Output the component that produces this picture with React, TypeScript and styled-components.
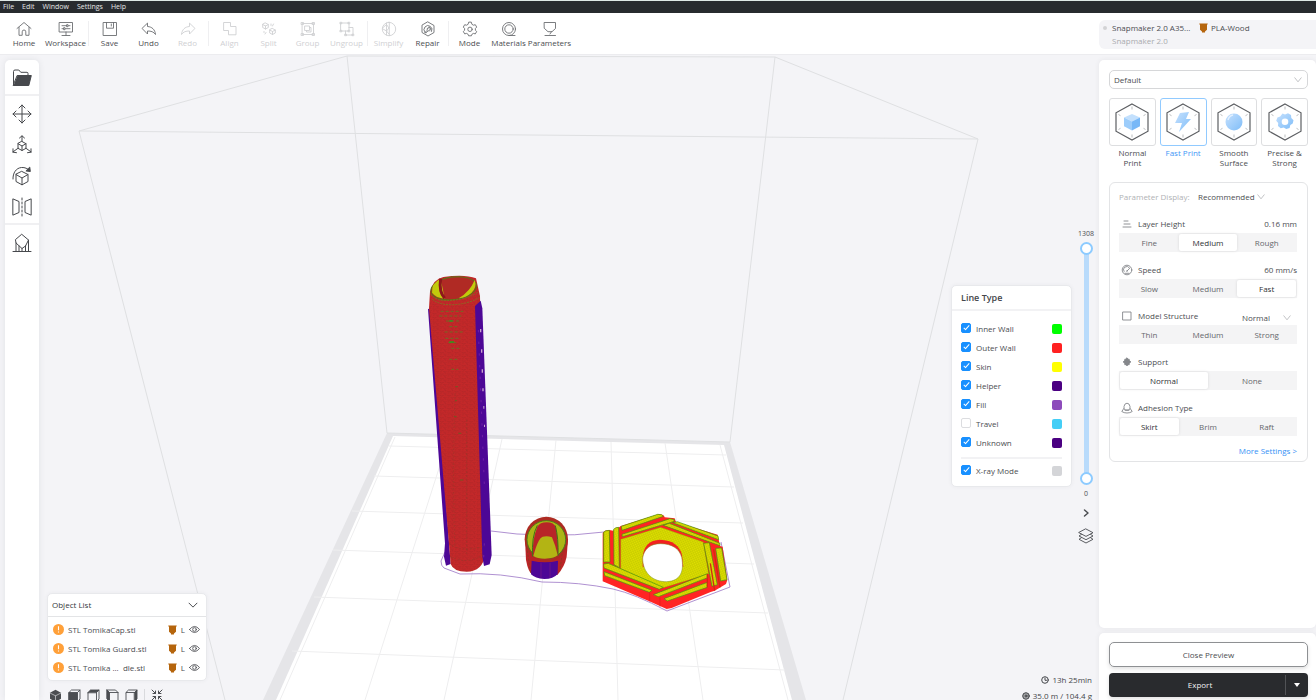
import React, { useState } from "react";
import styled, { createGlobalStyle } from "styled-components";

const ink = "#4b4d51";
const muted = "#b0b2b5";
const line = "#e3e4e6";
const canvas = "#f4f4f7";
const blue = "#1890ff";

const Global = createGlobalStyle`
  *, *::before, *::after { box-sizing: border-box; }
  body { margin: 0; background: ${canvas}; }
  body, button, input, select { font-family: "Open Sans", "Noto Sans", sans-serif; font-size: 8px; line-height: 12px; color: ${ink}; }
  button { border: 0; padding: 0; background: none; cursor: pointer; }
  svg { display: block; flex: none; }
  fieldset { border: 0; margin: 0; padding: 0; min-width: 0; }
  h2, ul { margin: 0; padding: 0; list-style: none; }
`;

const Page = styled.div`
  display: flex;
  flex-direction: column;
  height: 100vh;
  overflow: hidden;
`;

const MenuBar = styled.nav`
  display: flex;
  align-items: center;
  gap: 8px;
  flex: none;
  height: 13px;
  padding-left: 3px;
  background: #282b2f;
  border-top: 1px solid #dfe9e6;
`;

const MenuItem = styled.button`
  color: #e6e6e6;
  font-size: 7px;
  line-height: 12px;
`;

const Header = styled.header`
  display: flex;
  flex: none;
  height: 42px;
  background: #fff;
  border-bottom: 1px solid #ececef;
`;

const Toolbar = styled.div`
  display: flex;
  flex: 1;
  padding: 8px 0 0 4px;
`;

const ToolButton = styled.button<{ $w?: number }>`
  display: flex;
  flex-direction: column;
  align-items: center;
  width: ${(p) => p.$w ?? 39}px;
  height: 30px;
  white-space: nowrap;
  color: ${ink};
  & svg { color: #6c6e72; }
  &:disabled, &:disabled svg { color: #cfd0d3; cursor: default; }
`;

const ToolDivider = styled.span`
  width: 1px;
  height: 25px;
  margin: 0 1px;
  background: #efeff1;
`;

const Machine = styled.div`
  display: grid;
  grid-template-columns: 9px 87px auto;
  align-content: center;
  row-gap: 1px;
  width: 217px;
  height: 29px;
  margin-top: 7px;
  padding-left: 4px;
  border-radius: 6px 0 0 6px;
  background: ${canvas};
`;

const Dot = styled.span`
  width: 4px;
  height: 4px;
  align-self: center;
  border-radius: 50%;
  background: #d2d3d5;
`;

const Series = styled.span`
  grid-column: 2;
  color: #a9abae;
`;

const Material = styled.span`
  display: flex;
  align-items: center;
  gap: 3px;
`;

const Body = styled.main`
  display: flex;
  flex: 1;
  min-height: 0;
`;

const Stage = styled.section`
  position: relative;
  display: flex;
  flex: 1;
  min-width: 0;
  overflow: hidden;
`;

const SceneSvg = styled.svg`
  position: absolute;
  inset: 0;
  width: 100%;
  height: 100%;
`;

const Rail = styled.div`
  position: relative;
  display: flex;
  flex-direction: column;
  width: 34px;
  margin: 5px 0 0 5px;
  border-radius: 5px 5px 0 0;
  background: #fff;
  box-shadow: 0 0 6px rgba(60, 65, 80, 0.1);
`;

const RailGroup = styled.div`
  display: flex;
  flex-direction: column;
  align-items: center;
  padding: 2px 0 1px;
  & + & { border-top: 2px solid #f0f0f2; }
`;

const RailButton = styled.button`
  display: flex;
  align-items: center;
  justify-content: center;
  width: 34px;
  height: 31px;
  color: #47494d;
`;

const LeftDock = styled.div`
  position: relative;
  display: flex;
  flex-direction: column;
  justify-content: flex-end;
  gap: 8px;
  width: 160px;
  margin-left: 8px;
`;

const Card = styled.section`
  background: #fff;
  border: 1px solid #e8e9ec;
  border-radius: 5px;
  box-shadow: 0 0 4px rgba(60, 65, 80, 0.05);
`;

const ObjectHead = styled.header`
  display: flex;
  align-items: center;
  justify-content: space-between;
  height: 23px;
  padding: 0 8px 0 4px;
  border-bottom: 1px solid ${line};
`;

const ObjectTitle = styled.h2`
  font-size: 8px;
  font-weight: 500;
  color: #35373a;
`;

const ObjectRows = styled.ul`
  padding: 3px 6px 3px 5px;
`;

const ObjectRow = styled.li`
  display: flex;
  align-items: center;
  gap: 4px;
  height: 19px;
`;

const ObjectName = styled.span`
  flex: 1;
  white-space: pre;
`;

const Views = styled.div`
  display: flex;
  align-items: flex-start;
  gap: 6px;
  height: 11px;
  padding-left: 2px;
  color: #85878b;
`;

const ViewDivider = styled.span`
  width: 1px;
  height: 11px;
  background: #d9dadd;
`;

const RightDock = styled.div`
  position: relative;
  display: flex;
  flex-direction: column;
  align-items: flex-end;
  margin-left: auto;
  padding: 42px 5px 0 0;
`;

const Preview = styled.div`
  display: flex;
  flex: 1;
  align-items: center;
  gap: 6px;
`;

const LineCard = styled(Card)`
  width: 121px;
`;

const LineTitle = styled.h2`
  padding: 6px 9px;
  border-bottom: 2px solid #f2f2f4;
  font-size: 9px;
  line-height: 11px;
  font-weight: 600;
  color: #45474b;
`;

const LineRows = styled.div`
  padding: 9px 9px 3px;
`;

const LineRow = styled.label<{ $apart?: boolean }>`
  display: flex;
  align-items: center;
  gap: 5px;
  height: ${(p) => (p.$apart ? 26 : 19)}px;
  margin-top: ${(p) => (p.$apart ? 4 : 0)}px;
  border-top: ${(p) => (p.$apart ? "2px solid #f2f2f4" : "0")};
`;

const Check = styled.input`
  appearance: none;
  width: 10px;
  height: 10px;
  margin: 0 0 2px;
  border: 1px solid #dcdde0;
  border-radius: 2px;
  background: #fff;
  &:checked {
    border-color: ${blue};
    background: ${blue};
  }
  &:checked::after {
    content: "";
    display: block;
    width: 3px;
    height: 6px;
    margin: 0 0 0 3px;
    border: solid #fff;
    border-width: 0 1px 1px 0;
    transform: rotate(42deg);
  }
`;

const Swatch = styled.span<{ $c: string }>`
  width: 10px;
  height: 10px;
  margin-left: auto;
  border-radius: 2px;
  background: ${(p) => p.$c};
`;

const LayerColumn = styled.div`
  display: flex;
  flex-direction: column;
  align-items: center;
  width: 16px;
  margin-top: 4px;
  font-size: 7px;
`;

const RangeStack = styled.div`
  display: grid;
  margin: 2px 0 3px;
`;

const Range = styled.input<{ $track?: boolean }>`
  grid-area: 1 / 1;
  appearance: none;
  writing-mode: vertical-lr;
  direction: rtl;
  width: 13px;
  height: 243px;
  margin: 0;
  padding: 0;
  pointer-events: none;
  background: ${(p) => (p.$track ? "linear-gradient(#b9dbfb, #b9dbfb) center / 5px 231px no-repeat" : "none")};
  &::-webkit-slider-thumb {
    appearance: none;
    width: 13px;
    height: 13px;
    border: 2px solid #8dcbff;
    border-radius: 50%;
    background: #fff;
    pointer-events: auto;
  }
`;

const LayerActions = styled.div`
  display: flex;
  flex-direction: column;
  margin-top: 2px;
`;

const IconButton = styled.button`
  display: flex;
  align-items: center;
  justify-content: center;
  height: 23px;
  color: #4a4c50;
`;

const Stats = styled.div`
  display: flex;
  flex-direction: column;
  align-items: flex-end;
  gap: 4px;
  height: 26px;
  padding-right: 2px;
`;

const Stat = styled.span`
  display: flex;
  align-items: center;
  gap: 3px;
  color: #45474b;
`;

const Side = styled.aside`
  display: flex;
  flex-direction: column;
  gap: 5px;
  width: 217px;
  padding-top: 5px;
`;

const Settings = styled.section`
  flex: 1;
  min-height: 0;
  padding: 10px 8px 0 10px;
  border-radius: 5px;
  background: #fff;
  box-shadow: 0 0 5px rgba(60, 65, 80, 0.08);
`;

const SelectBox = styled.span<{ $kind?: "field" | "inline" }>`
  display: flex;
  align-items: center;
  color: #b2b4b7;
  ${(p) => p.$kind === "field" && `
    height: 19px;
    padding: 0 5px 0 4px;
    border: 1px solid #d6d7d9;
    border-radius: 5px;
    margin-bottom: 9px;
  `}
`;

const Select = styled.select<{ $w?: number }>`
  appearance: none;
  flex: ${(p) => (p.$w ? "none" : 1)};
  width: ${(p) => (p.$w ? `${p.$w}px` : "auto")};
  padding: 0;
  border: 0;
  outline: 0;
  background: transparent;
`;

const Profiles = styled.div`
  display: grid;
  grid-template-columns: repeat(4, 1fr);
  gap: 4px;
  height: 75px;
  margin-bottom: 9px;
`;

const Profile = styled.button<{ $on?: boolean }>`
  display: flex;
  flex-direction: column;
  align-items: center;
  gap: 2px;
  line-height: 10px;
  color: ${(p) => (p.$on ? "#3f97f6" : ink)};
`;

const ProfileTile = styled.span<{ $on?: boolean }>`
  display: flex;
  align-items: center;
  justify-content: center;
  width: 100%;
  height: 48px;
  border: 1px solid ${(p) => (p.$on ? "#91caff" : "#dddee0")};
  border-radius: 3px;
`;

const ProfileName = styled.span`
  width: 38px;
`;

const Params = styled.div`
  display: flex;
  flex-direction: column;
  gap: 8px;
  padding: 4px 10px 4px 9px;
  border: 1px solid ${line};
  border-radius: 6px;
`;

const Row = styled.div`
  display: flex;
  align-items: center;
  height: 19px;
`;

const RowIcon = styled.span`
  display: flex;
  justify-content: center;
  width: 15px;
  margin-right: 4px;
  color: #85878b;
`;

const RowValue = styled.span`
  margin-left: auto;
`;

const RowSelect = styled.span`
  margin: 5px 6px 0 auto;
`;

const DisplayLabel = styled.label`
  width: 79px;
  color: ${muted};
`;

const Segments = styled.div`
  display: flex;
  height: 19px;
  padding: 1px;
  background: #f4f4f5;
`;

const Segment = styled.label<{ $on: boolean }>`
  display: flex;
  flex: 1;
  align-items: center;
  justify-content: center;
  border-radius: 2px;
  color: ${(p) => (p.$on ? "#303235" : "#66686c")};
  background: ${(p) => (p.$on ? "#fff" : "transparent")};
  box-shadow: ${(p) => (p.$on ? "0 0 3px rgba(0, 0, 0, 0.12)" : "none")};
`;

const SegmentInput = styled.input`
  appearance: none;
  width: 0;
  height: 0;
  margin: 0;
`;

const More = styled.a`
  align-self: flex-end;
  line-height: 13px;
  color: #3591f5;
  text-decoration: none;
`;

const Actions = styled.section`
  display: flex;
  flex-direction: column;
  gap: 6px;
  flex: none;
  padding: 9px 8px 3px 10px;
  border-radius: 5px 5px 0 0;
  background: #fff;
  box-shadow: 0 0 5px rgba(60, 65, 80, 0.08);
`;

const CloseButton = styled.button`
  height: 25px;
  border: 1px solid #8e9093;
  border-radius: 5px;
  box-shadow: 0 2px 4px rgba(0, 0, 0, 0.12);
`;

const ExportGroup = styled.div`
  display: flex;
  height: 24px;
  border-radius: 4px;
  background: #292b2e;
  box-shadow: 0 2px 4px rgba(0, 0, 0, 0.12);
`;

const ExportButton = styled.button`
  flex: 1;
  padding-left: 6px;
  color: #f0f0f0;
  font-weight: 500;
`;

const ExportMenu = styled.button`
  display: flex;
  align-items: center;
  justify-content: center;
  width: 23px;
  height: 20px;
  margin-top: 2px;
  border-left: 1px solid #515356;
  color: #fff;
`;

type GlyphProps = { size?: number; box?: number; w?: number; children: React.ReactNode };
const Glyph = ({ size = 16, box = 16, w = 1, children }: GlyphProps) => (
  <svg width={size} height={size} viewBox={`0 0 ${box} ${box}`} fill="none" stroke="currentColor" strokeWidth={w} strokeLinejoin="round" strokeLinecap="round" aria-hidden="true">
    {children}
  </svg>
);

const Chevron = () => (
  <Glyph size={8} box={8} w={0.8}><path d="M.8 1.8 4 5.800 7.200 1.800" /></Glyph>
);

const Shield = () => (
  <svg width="9" height="10" viewBox="0 0 9 10" aria-hidden="true">
    <path d="M.3.5h8.400v1H8v5.200L6 8.500v1H3V8.500L1 6.700V1.500H.3Z" fill="#b5650d" />
  </svg>
);

const toolIcons: Record<string, React.ReactNode> = {
  Home: <path d="M1 7.500 8 1.500l7 6M3 6.300v8h3.200v-3.500a1.800 1.800 0 0 1 3.600 0v3.500H13v-8" />,
  Workspace: <path d="M1.500 1.500h13v9.500h-13ZM8 11v3.500M4 14.500h8M4 4.700h4.500M10.500 4.700H12M4 7.700h1.500M7.500 7.700H12M9 3.700h1v2H9ZM6 6.700h1v2H6Z" />,
  Save: <path d="M1.500 1.500h13v13h-13ZM4.500 1.500v5.700h7V1.500M9.300 3v2" />,
  Undo: <path d="M6.500 2.500v3C11 5.800 14 8.500 14.500 13.500 12.700 10.800 10 9.900 6.500 10v3L1.300 7.700Z" />,
  Redo: <path d="M9.500 2.500v3C5 5.800 2 8.500 1.500 13.500 3.300 10.800 6 9.900 9.500 10v3l5.200-5.300Z" />,
  Align: <path d="M2 1.500h6.500v4H14v8.300H6.500V9.500H2Z" />,
  Split: <path d="M4.500 2 7.300 3.500v3L4.500 8 1.700 6.500v-3ZM1.700 3.500 4.500 5l2.800-1.500M4.500 5v3M11.500 7.500 14.300 9v3l-2.800 1.500L8.700 12V9ZM8.700 9l2.800 1.500L14.300 9M11.500 10.500v3M10 3v1.500M12.500 3l-1 2M3 10.500v1M5 11.500l-1 1.500" />,
  Group: <path d="M2.500 2.500h11v11h-11ZM1.500 1.500h2v2h-2ZM12.500 1.500h2v2h-2ZM1.500 12.500h2v2h-2ZM12.500 12.500h2v2h-2ZM5 5h4.500v4.500H5ZM9.500 6.500H11V11H6.500V9.500" />,
  Ungroup: <path d="M2 2h8v8H2ZM10 6.500h4v7.500H6.500v-4M1.300 1.300h1.500v1.500H1.300ZM9.300 1.300h1.500v1.500H9.300ZM1.300 9.300h1.500v1.500H1.300ZM9.300 9.300h1.500v1.500H9.300ZM13.300 13.200h1.500v1.500h-1.500ZM6 13.200h1.500v1.500H6Z" />,
  Simplify: <path d="M8 1.300a6.700 6.700 0 1 0 0 13.400 6.700 6.700 0 0 0 0-13.400ZM8.300 1.300v13.400M5.500 2v12M1.500 7l4-3.500L8 7l-2.500 3L2 8M5.500 10 8 13" />,
  Repair: <><path d="M8 1l6 3.500v7L8 15l-6-3.500v-7Z" /><path d="M5 11.300a4 4 0 1 1 6.500-.8M5 11.500l2.300-2.300A2.200 2.200 0 0 1 10 6.300L8.800 7.500l.7.700 1.300-1.200a2.200 2.200 0 0 1-2.700 2.800L6.500 11.500Z" /></>,
  Mode: <><path d="m6.600 1.500-.5 1.800-1.600.9-1.800-.5-1.400 2.400L2.600 7.500v1.800l-1.300 1.200 1.400 2.400 1.800-.5 1.600.9.500 1.500h2.800l.5-1.500 1.600-.9 1.800.5 1.400-2.400-1.300-1.200V7.500l1.300-1.400-1.400-2.400-1.800.5-1.600-.9-.5-1.800Z" /><circle cx="8" cy="8.300" r="2.200" /></>,
  Materials: <><circle cx="8" cy="8" r="6.500" /><circle cx="8" cy="8" r="4.200" /><path d="M8 14.500h6" /></>,
  Parameters: <path d="M2.500 1.500h11v6L10 10.700H6L2.500 7.500ZM9.500 10.700 8 13M3 14.500h10.500" />,
};

const tools: ([string, boolean, number?] | null)[] = [
  ["Home", true, 40], ["Workspace", true, 43], null,
  ["Save", true], ["Undo", true], ["Redo", false], null,
  ["Align", false], ["Split", false], ["Group", false], ["Ungroup", false], null,
  ["Simplify", false], ["Repair", true], null,
  ["Mode", true], ["Materials", true], ["Parameters", true, 43],
];

const railIcons: [string, React.ReactNode][][] = [
  [["Open", <><path d="M1.500 16V3.500Q1.500 2 3 2h3.800l2 2.300H15Q16 4.300 16 5.500V7" /><path d="M5.500 7.500H19.300L16.800 17.500H1.500Z" fill="currentColor" /></>]],
  [
    ["Move", <path d="M10 1v18M1 10h18M7 4l3-3 3 3M7 16l3 3 3-3M4 7l-3 3 3 3M16 7l3 3-3 3" />],
    ["Scale", <path d="M10 6.500 14 8.700v4.600L10 15.500 6 13.300V8.700ZM6 8.700l4 2.300 4-2.300M10 11v4.500M10 6.500V1M7.500 3 10 .8 12.500 3M6 13.300.8 17M1 13.800V17.200l3.500.5M14 13.300l5.200 3.700M19 13.800v3.400l-3.500.5" />],
    ["Rotate", <><path d="M10 5.500 16 8.500v7L10 18.800 4 15.500v-7ZM4 8.500l6 3.500 6-3.500M10 12v6.800M1 13C.8 7 4 2 9.500 1.500 13 1.300 15.500 2.500 17.500 4.500" /><path d="m17.800 1.500.5 4-4-.5Z" fill="currentColor" /></>],
    ["Mirror", <><path d="M1.200 2 7 4.500v11L1.200 18ZM18.800 2 13 4.500v11L18.800 18Z" /><path d="M10 1v18" strokeDasharray="2 2" /></>],
  ],
  [["Support", <path d="M1 18.500h18M10 1.500 16.500 7 13.500 13 10 15.500 4 10 3.500 7ZM4 10v8.500M7 13v5.500M10 15.500v3M13.500 13v5.500M16.500 7v11.500" />]],
];

const objects = ["STL TomikaCap.stl", "STL Tomika Guard.stl", "STL Tomika ...  dle.stl"];

const lineTypes: [string, string, boolean][] = [
  ["Inner Wall", "#00ff00", true],
  ["Outer Wall", "#ff2121", true],
  ["Skin", "#ffff00", true],
  ["Helper", "#4b0082", true],
  ["Fill", "#8d4bbb", true],
  ["Travel", "#44cef6", false],
  ["Unknown", "#4b0082", true],
  ["X-ray Mode", "#d4d5d8", true],
];

const profiles: [string, React.ReactNode][] = [
  ["Normal Print", <><path d="m18 11 8 3.500-8 4-8-4Z" fill="#c3e0fd" /><path d="m10 14.500 8 4v9l-8-4.300Z" fill="#9dcdfb" /><path d="m26 14.500-8 4v9l8-4.300Z" fill="#78b8f7" /></>],
  ["Fast Print", <path d="m15 10 9-1-3 7h5L14 29l3-9h-7Z" fill="url(#shade)" />],
  ["Smooth Surface", <><circle cx="18" cy="19" r="8.500" fill="url(#shade)" /><path d="M12 17q1-4 5-5" stroke="#e3f1ff" fill="none" strokeWidth="1.500" /></>],
  ["Precise & Strong", <path fillRule="evenodd" fill="url(#shade)" d="m15.500 10.500 2.500 1 3-1.200 3 1.700.3 3 2.200 2.300-.8 3.300-2.400 1.500-.7 3-3.400.8-2.500-1.400-3 .7-2.700-2.200.2-2.900-2-2.400 1.200-3.200 2.800-1ZM18 15.500a3.300 3.300 0 1 0 0 6.600 3.300 3.300 0 0 0 0-6.600Z" />],
];

const Scene = () => (
  <SceneSvg viewBox="0 55 1099 645" preserveAspectRatio="xMidYMid slice" role="img" aria-label="Print preview">
    <defs>
      <pattern id="skin" width="5" height="5" patternUnits="userSpaceOnUse" patternTransform="rotate(20)">
        <rect width="5" height="5" fill="#e3e500" />
        <path d="M0 1.500h5M1.500 0v5" stroke="#b7bd00" strokeWidth="1.100" />
      </pattern>
      <pattern id="wall" width="22" height="13" patternUnits="userSpaceOnUse">
        <rect width="22" height="13" fill="#c42829" />
        <path d="M1 3q6 4 12 1M12 9q5 4 9 0M3 10h4M16 2h4" stroke="#a02425" strokeWidth="1.600" fill="none" />
      </pattern>
    </defs>
    <path d="M387 433 730 442 806 700H263Z" fill="#e5e5e8" />
    <path d="M393 436 724 445 792 700H276Z" fill="#fff" />
    <g stroke="#eeeeef" fill="none">
      <path d="M395 437 280 700M720 445 788 700M389 446 726 455M374 476 734 487M352 511 743 523M333 550 754 564M314 597 768 613M292 651 785 670" />
      <path d="M449 437 365 700M502 439 444 700M556 440 531 700M611 442 618 700M665 443 703 700" />
    </g>
    <path d="M225 700 79 131 347 56 775 57 978 139 843 700M79 131 978 139M347 56 387 433 730 442 775 57" fill="none" stroke="#dfe0e2" />
    <path d="M445 552 441 561Q441 566 444 568L460 574Q500 572 542 582 580 582 613 589 635 594 667 611L730 587 721 542M491 531 517 534 545 535Q575 536 604 532" fill="none" stroke="#a684cc" strokeWidth="0.900" />

    <g transform="translate(410 260) scale(0.33333)">
      <path d="M54 146 68 150 118 860 122 912 108 917 102 890 105 850Z" fill="#4d0796" />
      <path d="M57 145 60 95Q70 57 100 51 165 42 198 55L210 108 225 885Q218 935 170 935 130 935 122 912L82 440Z" fill="url(#wall)" />
      <path d="M195 138 212 122 217 145 245 885 239 913 222 918 217 890Z" fill="#4d0796" />
      <path d="M205 210 224 700M223 850 220 915" stroke="#6d1ea5" strokeWidth="3" strokeDasharray="7 28" />
      <g fill="#c9a2cf"><path d="M210 207h4v10h-4ZM213 268h4v10h-4ZM215 328h4v10h-4ZM217 385h4v9h-4ZM220 438h3v8h-3ZM222 494h3v7h-3Z" /></g>
      <ellipse cx="131" cy="85" rx="69" ry="34" transform="rotate(-8 131 85)" fill="#b02a24" stroke="#557a16" strokeWidth="3" />
      <path d="M66 98Q63 70 92 56L104 116Q78 114 66 98Z" fill="#c2cb0c" />
      <path d="M92 56Q86 95 104 115" stroke="#8d171c" strokeWidth="9" fill="none" />
      <path d="M146 115Q180 95 194 60 202 82 184 99 168 113 146 115Z" fill="#c2cb0c" />
      <path d="M62 103Q78 124 112 121 165 122 206 95M67 118Q90 136 130 134 175 132 209 112" fill="none" stroke="#7b7b20" strokeWidth="2.500" strokeDasharray="6 3" />
      <g stroke="#627824" strokeWidth="2.500" strokeDasharray="9 6">
        <path d="M92 154H160M88 168H154M108 183H148M118 200H142M104 216H160M106 235H152M115 248H143M124 265H150M118 298H148M124 328H145" />
      </g>
      <path d="M118 183h10M118 246h14" stroke="#2d9d1c" strokeWidth="5" />
      <path d="M118 850Q150 880 225 858M122 890Q170 915 220 885M135 400Q128 620 134 860M170 480V880" fill="none" stroke="#8c3c28" strokeWidth="1.500" strokeDasharray="6 5" />
      <path d="M136 380h8M135 422h6M132 470h8M145 520h9M150 660h10" stroke="#705b22" strokeWidth="3" />

      <path d="M345 838 348 900Q355 940 370 945H442Q464 920 470 890L474 838Z" fill="#ba2426" />
      <ellipse cx="409" cy="838" rx="65" ry="68" fill="#ad2b22" />
      <ellipse cx="409" cy="839" rx="58" ry="57" fill="#abb514" stroke="#4c7b19" strokeWidth="3" />
      <path d="M368 890Q366 840 382 800 390 787 410 787 432 787 438 803 446 850 444 888L410 898Z" fill="#b82428" />
      <path d="M368 890Q364 830 382 796M444 888Q446 835 436 797" stroke="#3f7218" strokeWidth="3" fill="none" />
      <path d="M370 888Q384 835 398 830 412 826 426 832 438 860 443 886 430 896 405 896 382 896 370 888Z" fill="#b3b414" />
      <path d="M350 860 362 940M458 870 450 930" stroke="#8a3a20" strokeWidth="2.500" strokeDasharray="7 5" />
      <path d="M365 902Q405 912 444 902L443 942Q430 957 403 957 375 955 363 943Z" fill="#4d0796" />
      <path d="M393 908V953M420 908V953" stroke="#7a1c86" strokeWidth="2" />
    </g>

    <g transform="translate(590 500) scale(0.33333)">
      <path fill="#ff2424" d="M38 100Q42 90 58 90L70 92Q74 82 88 82L92 78 205 43Q222 42 224 52L254 55 258 66 383 104 390 138 398 140 412 240 408 252 374 272 362 276 245 324 230 327 178 304 38 244Z" />
      <path fill="url(#skin)" stroke="#7b8a00" d="M92 118 212 82 340 126 356 222 218 264 92 206Z" />
      <path d="M158 172C160 138 178 120 210 119 248 120 270 138 276 165L280 200H158Z" fill="#f22020" />
      <path d="M158 174C162 146 182 131 212 131 248 132 268 146 275 172 283 214 272 243 230 245 190 246 158 220 158 174Z" fill="#fff" stroke="#7a8f20" strokeWidth="1.500" />
      <g fill="url(#skin)" stroke="#3f9210" strokeWidth="2" strokeLinejoin="round">
        <path d="M41 97Q45 91 58 91L60 186H41ZM71 88Q76 82 86 82L88 203 72 194ZM94 79 203 43Q217 42 220 49L96 91ZM96 103 240 56 254 59 250 65 97 110ZM220 76 238 70 390 130V137ZM248 68 262 65 384 108 386 119Z" />
        <path d="M41 192 55 190 220 262 208 268 42 204ZM42 215 186 271 178 277 44 227ZM190 284 352 221 353 233 205 290ZM222 296 352 247V262L232 303ZM341 130 358 128 382 254 366 259ZM377 145 395 144 411 239 392 243Z" />
      </g>
      <path d="M352 222V262M361 190 374 272M371 148 390 262" stroke="#d42a12" strokeWidth="4" />
      <path d="M179 276V304M210 292V320" stroke="#dc1d1d" strokeWidth="2" />
    </g>
  </SceneSvg>
);

type SegProps = { name: string; options: string[]; initial?: string };
const SegmentedControl = ({ name, options, initial }: SegProps) => {
  const [value, setValue] = useState(initial);
  return (
    <Segments role="radiogroup" aria-label={name}>
      {options.map((o) => (
        <Segment key={o} $on={value === o}>
          <SegmentInput type="radio" name={name} checked={value === o} onChange={() => setValue(o)} />
          {o}
        </Segment>
      ))}
    </Segments>
  );
};

type ParamProps = { label: string; icon: React.ReactNode; options: string[]; initial?: string; children?: React.ReactNode };
const Param = ({ label, icon, options, initial, children }: ParamProps) => (
  <fieldset>
    <Row>
      <RowIcon><Glyph size={12} box={12} w={0.9}>{icon}</Glyph></RowIcon>
      {label}
      {children}
    </Row>
    <SegmentedControl name={label} options={options} initial={initial} />
  </fieldset>
);

const cubeViews: [string, React.ReactNode][] = [
  ["Isometric", <><path d="m6.500.8 5.500 3v6l-5.500 3-5.500-3v-6Z" fill="currentColor" stroke="none" /><path d="m1 4 5.500 2.800L12 4M6.500 6.800v6" stroke="#d5d6d8" strokeWidth=".7" /></>],
  ["Front", <><path d="M1 3.500h8.500v9H1Z" fill="currentColor" /><path d="M1 3.500 3.500 1H12v9l-2.500 2.500M9.500 3.500 12 1" /></>],
  ["Top", <><path d="M1 3.500 3.500 1H12L9.500 3.500Z" fill="currentColor" /><path d="M1 3.500V12.500h8.500v-9M12 1v9l-2.500 2.500" /></>],
  ["Left", <><path d="M1 1 3.500 3.500v9L1 10Z" fill="currentColor" /><path d="M1 1h8.500L12 3.500v9H3.500M3.500 3.500H12" /></>],
  ["Right", <><path d="M9.500 3.500 12 1v9l-2.500 2.500Z" fill="currentColor" /><path d="M9.500 3.500H1v9h8.500M1 3.500 3.500 1H12" /></>],
];

export default function App() {
  const [checks, setChecks] = useState(lineTypes.map((t) => t[2]));
  const [top, setTop] = useState(1308);
  const [bottom, setBottom] = useState(0);
  const [profile, setProfile] = useState("Fast Print");

  return (
    <Page>
      <Global />
      <MenuBar>
        {["File", "Edit", "Window", "Settings", "Help"].map((m) => <MenuItem key={m}>{m}</MenuItem>)}
      </MenuBar>
      <Header>
        <Toolbar>
          {tools.map((t, i) =>
            t ? (
              <ToolButton key={t[0]} disabled={!t[1]} $w={t[2]}>
                <Glyph w={0.9}>{toolIcons[t[0]]}</Glyph>
                {t[0]}
              </ToolButton>
            ) : (
              <ToolDivider key={i} />
            ),
          )}
        </Toolbar>
        <Machine>
          <Dot />
          <span>Snapmaker 2.0 A35...</span>
          <Material><Shield />PLA-Wood</Material>
          <Series>Snapmaker 2.0</Series>
        </Machine>
      </Header>
      <Body>
        <Stage>
          <Scene />
          <Rail>
            {railIcons.map((group, i) => (
              <RailGroup key={i}>
                {group.map(([name, icon]) => (
                  <RailButton key={name} aria-label={name}><Glyph size={20} box={20}>{icon}</Glyph></RailButton>
                ))}
              </RailGroup>
            ))}
          </Rail>
          <LeftDock>
            <Card>
              <ObjectHead>
                <ObjectTitle>Object List</ObjectTitle>
                <button aria-label="Collapse"><Glyph size={10} box={8} w={0.8}><path d="M.8 2.500 4 5.700 7.200 2.500" /></Glyph></button>
              </ObjectHead>
              <ObjectRows>
                {objects.map((name) => (
                  <ObjectRow key={name}>
                    <svg width="11" height="11" viewBox="0 0 11 11" aria-hidden="true">
                      <circle cx="5.500" cy="5.500" r="5.500" fill="#ffa039" />
                      <path d="M5.500 2.300v4M5.500 7.600v1" stroke="#fff" strokeWidth="1.100" />
                    </svg>
                    <ObjectName>{name}</ObjectName>
                    <Shield />
                    <span>L</span>
                    <button aria-label={`Toggle ${name}`}>
                      <Glyph size={11} box={12} w={0.9}><path d="M.5 6Q6-.8 11.500 6 6 12.800.5 6Z" /><circle cx="6" cy="6" r="2" /></Glyph>
                    </button>
                  </ObjectRow>
                ))}
              </ObjectRows>
            </Card>
            <Views>
              {cubeViews.map(([name, icon]) => (
                <button key={name} aria-label={name}><Glyph size={13} box={13} w={0.9}>{icon}</Glyph></button>
              ))}
              <ViewDivider />
              <button aria-label="Fit view">
                <Glyph size={12} box={12}><path d="M1 1l3.500 3.500M4.500 2v2.500H2M11 1 7.500 4.500M7.500 2v2.500H10M1 11l3.500-3.500M2 7.500h2.500V10M11 11 7.500 7.500M10 7.500H7.500V10" /></Glyph>
              </button>
            </Views>
          </LeftDock>
          <RightDock>
            <Preview>
              <LineCard>
                <LineTitle>Line Type</LineTitle>
                <LineRows>
                  {lineTypes.map(([name, color], i) => (
                    <LineRow key={name} $apart={name === "X-ray Mode"}>
                      <Check
                        type="checkbox"
                        checked={checks[i]}
                        onChange={() => setChecks(checks.map((c, j) => (j === i ? !c : c)))}
                      />
                      {name}
                      <Swatch $c={color} />
                    </LineRow>
                  ))}
                </LineRows>
              </LineCard>
              <LayerColumn>
                <span>{top}</span>
                <RangeStack>
                  <Range $track type="range" aria-label="Top layer" min={0} max={1308} value={top} onChange={(e) => setTop(+e.target.value)} />
                  <Range type="range" aria-label="Bottom layer" min={0} max={1308} value={bottom} onChange={(e) => setBottom(+e.target.value)} />
                </RangeStack>
                <span>{bottom}</span>
                <LayerActions>
                  <IconButton aria-label="Collapse panel"><Glyph size={10} box={10} w={1.5}><path d="M3.500 2 7 5 3.500 8" /></Glyph></IconButton>
                  <IconButton aria-label="Layers">
                    <Glyph size={16} w={0.9}><path d="m8 1 7 3.700-7 3.700-7-3.700ZM3.500 6.300 1 8l7 3.700L15 8l-2.500-1.700M3.500 9.600 1 11.300 8 15l7-3.700-2.500-1.700" /></Glyph>
                  </IconButton>
                </LayerActions>
              </LayerColumn>
            </Preview>
            <Stats>
              <Stat>
                <Glyph size={8} box={8}><circle cx="4" cy="4" r="3.300" /><path d="M4 2v2.300h1.500" /></Glyph>
                13h 25min
              </Stat>
              <Stat>
                <Glyph size={8} box={8}><circle cx="4" cy="4" r="3.300" fill="#a5a6a8" /><circle cx="4" cy="4" r="1" /></Glyph>
                35.0 m / 104.4 g
              </Stat>
            </Stats>
          </RightDock>
        </Stage>
        <Side>
          <Settings>
            <SelectBox $kind="field">
              <Select aria-label="Profile set"><option>Default</option></Select>
              <Chevron />
            </SelectBox>
            <Profiles>
              {profiles.map(([name, art]) => (
                <Profile key={name} $on={profile === name} onClick={() => setProfile(name)}>
                  <ProfileTile $on={profile === name}>
                    <svg width="36" height="38" viewBox="0 0 36 38" aria-hidden="true">
                      <defs>
                        <linearGradient id="shade" x1="0" y1="0" x2="1" y2="1">
                          <stop stopColor="#c6e1fe" />
                          <stop offset="1" stopColor="#7fbdf8" />
                        </linearGradient>
                      </defs>
                      <path d="M18 1 34 9.800v18.400L18 37 2 28.200V9.800Z" fill="none" stroke="#5d5f63" strokeWidth="1.200" />
                      <path d="M18 3.500v3M18 31.500v3M4.500 11.500l2 1.200M31.500 11.500l-2 1.200M4.500 26.500l2-1.200M31.500 26.500l-2-1.200" stroke="#aaacaf" strokeWidth=".8" />
                      {art}
                    </svg>
                  </ProfileTile>
                  <ProfileName>{name}</ProfileName>
                </Profile>
              ))}
            </Profiles>
            <Params>
              <Row>
                <DisplayLabel htmlFor="display">Parameter Display:</DisplayLabel>
                <SelectBox>
                  <Select id="display" $w={59}><option>Recommended</option></Select>
                  <Chevron />
                </SelectBox>
              </Row>
              <Param label="Layer Height" options={["Fine", "Medium", "Rough"]} initial="Medium" icon={<path d="M3 3h4M3 6h6M2 9h8" />}>
                <RowValue>0.16 mm</RowValue>
              </Param>
              <Param label="Speed" options={["Slow", "Medium", "Fast"]} initial="Fast" icon={<><circle cx="6" cy="6" r="4.800" /><path d="M3 7.500A3.200 3.200 0 0 1 8.500 4M6 7l2.500-2.500M4 9.300h4M5.500 7h1" /></>}>
                <RowValue>60 mm/s</RowValue>
              </Param>
              <Param label="Model Structure" options={["Thin", "Medium", "Strong"]} icon={<path d="M2 2h8v8H2Z" />}>
                <RowSelect>
                  <SelectBox>
                    <Select aria-label="Structure mode" $w={41}><option>Normal</option></Select>
                    <Chevron />
                  </SelectBox>
                </RowSelect>
              </Param>
              <Param label="Support" options={["Normal", "None"]} initial="Normal" icon={<path d="m6 2 1.200 1.200 1 0v1L9.800 6 8.200 7.500v1.200h-1L6 9.800 4.800 8.700h-1V7.500L2.200 6l1.600-1.800v-1h1Z" fill="currentColor" />} />
              <Param label="Adhesion Type" options={["Skirt", "Brim", "Raft"]} initial="Skirt" icon={<path d="M4 8Q2.500 6.500 3 4.500 3.500 1.300 6 1.200 8.500 1.300 9 4.500 9.500 6.500 8 8ZM4 8H8M2.800 6.500.8 9.500Q3 11 6 11T11.200 9.500l-2-3" />} />
              <More href="#more">More Settings &gt;</More>
            </Params>
          </Settings>
          <Actions>
            <CloseButton>Close Preview</CloseButton>
            <ExportGroup>
              <ExportButton>Export</ExportButton>
              <ExportMenu aria-label="Export options">
                <svg width="6" height="4" viewBox="0 0 6 4" aria-hidden="true"><path d="M0 0h6L3 4Z" fill="currentColor" /></svg>
              </ExportMenu>
            </ExportGroup>
          </Actions>
        </Side>
      </Body>
    </Page>
  );
}
